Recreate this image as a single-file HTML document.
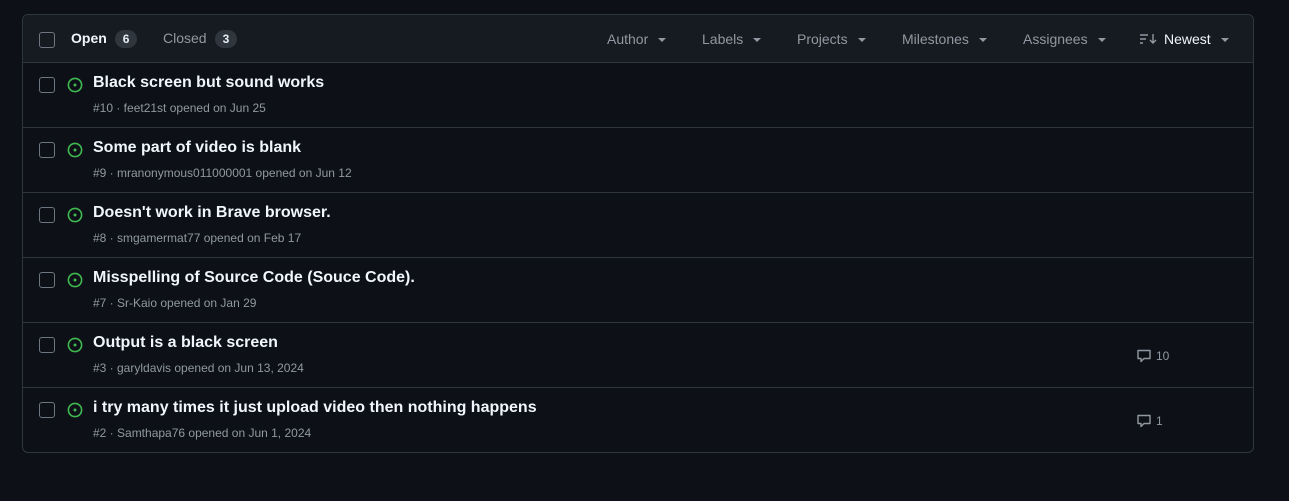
<!DOCTYPE html><html><head><style>
body{margin:0;background:#0d1117;font-family:"Liberation Sans",sans-serif;width:1289px;height:501px;overflow:hidden;position:relative}
.box{position:absolute;left:22px;top:14px;width:1230px;height:437px;border:1px solid #30363d;border-radius:6px;overflow:hidden}
.hd{position:absolute;left:0;top:0;width:1230px;height:47px;background:#161b22;border-bottom:1px solid #30363d}
.cb{position:absolute;width:14px;height:14px;border:1px solid #6e7681;border-radius:3px;left:16px}
.t{position:absolute;white-space:nowrap}
.cnt{display:inline-block;background:#30363d;color:#e6edf3;font-size:12px;font-weight:bold;border-radius:10px;padding:2px 8px;margin-left:8px;line-height:14px}
.f{position:absolute;top:16px;color:#9198a1;font-size:14px}
.car{display:inline-block;width:0;height:0;border-left:4px solid transparent;border-right:4px solid transparent;border-top:4px solid #9198a1;margin-left:10px;vertical-align:middle}
.row{position:absolute;left:0;width:1230px;height:64px;border-bottom:1px solid #30363d}
.ti{position:absolute;left:70px;top:11px;color:#f0f6fc;font-size:16px;font-weight:bold}
.me{position:absolute;left:70px;top:38px;color:#9198a1;font-size:12px}
.ic{position:absolute;left:44px;top:14px}
.cm{position:absolute;left:1113px;top:25px;color:#9198a1;font-size:12px}
</style></head><body>
<div class="box">
<div class="hd">
<div class="cb" style="top:17px"></div>
<div class="t" style="left:48px;top:15px;font-size:14px;color:#f0f6fc;font-weight:bold">Open<span class="cnt">6</span></div>
<div class="t" style="left:140px;top:15px;font-size:14px;color:#9198a1">Closed<span class="cnt">3</span></div>
<div class="f" style="left:584px">Author<span class="car"></span></div>
<div class="f" style="left:679px">Labels<span class="car"></span></div>
<div class="f" style="left:774px">Projects<span class="car"></span></div>
<div class="f" style="left:879px">Milestones<span class="car"></span></div>
<div class="f" style="left:1000px">Assignees<span class="car"></span></div>
<div class="f" style="left:1117px;color:#f0f6fc"><svg width="18" height="12" viewBox="0 0 18 12" style="vertical-align:-1px;margin-right:6px"><path d="M0 2h8M0 6h6M0 10h3" stroke="#9198a1" stroke-width="1.4"/><path d="M13 1v9M10 7l3 3 3-3" stroke="#9198a1" stroke-width="1.4" fill="none"/></svg>Newest<span class="car"></span></div>
</div>
<div id="rows"></div>
</div>
<script>
var d=[["Black screen but sound works","#10 · feet21st opened on Jun 25",""],["Some part of video is blank","#9 · mranonymous011000001 opened on Jun 12",""],["Doesn't work in Brave browser.","#8 · smgamermat77 opened on Feb 17",""],["Misspelling of Source Code (Souce Code).","#7 · Sr-Kaio opened on Jan 29",""],["Output is a black screen","#3 · garyldavis opened on Jun 13, 2024","10"],["i try many times it just upload video then nothing happens","#2 · Samthapa76 opened on Jun 1, 2024","1"]];
var h="";d.forEach(function(r,i){h+='<div class="row" style="top:'+(48+i*65)+'px"><div class="cb" style="top:14px"></div><svg class="ic" width="16" height="16" viewBox="0 0 16 16"><circle cx="8" cy="8" r="6.6" stroke="#3fb950" stroke-width="1.6" fill="none"/><circle cx="8" cy="8" r="1.5" fill="#3fb950"/></svg><div class="t ti">'+r[0]+'</div><div class="t me">'+r[1]+'</div>'+(r[2]?'<div class="t cm"><svg width="16" height="16" viewBox="0 0 16 16" style="vertical-align:-4px;margin-right:4px"><path d="M2 2.5h12v8H8l-3 3v-3H2z" stroke="#9198a1" stroke-width="1.4" fill="none" stroke-linejoin="round"/></svg>'+r[2]+'</div>':'')+'</div>'});
document.getElementById("rows").innerHTML=h;
</script>
</body></html>
